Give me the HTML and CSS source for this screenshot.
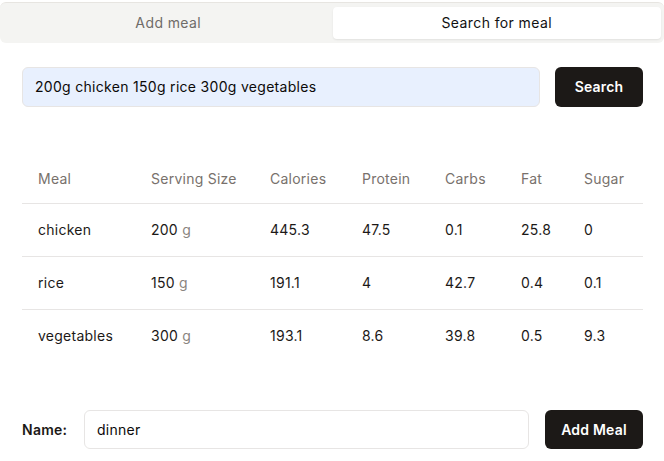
FILE: index.html
```html
<!DOCTYPE html>
<html>
<head>
<meta charset="utf-8">
<link rel="stylesheet" href="styles.css">
</head>
<body>
<div class="page">
  <div class="tabs">
    <div class="tab">Add meal</div>
    <div class="tab active">Search for meal</div>
  </div>
  <div class="content">
    <div class="search-row">
      <div class="input filled">200g chicken 150g rice 300g vegetables</div>
      <button class="btn search-btn">Search</button>
    </div>
    <table class="meals">
      <colgroup>
        <col class="c1"><col class="c2"><col class="c3"><col class="c4"><col class="c5"><col class="c6"><col class="c7">
      </colgroup>
      <thead>
        <tr><th>Meal</th><th>Serving Size</th><th>Calories</th><th>Protein</th><th>Carbs</th><th>Fat</th><th>Sugar</th></tr>
      </thead>
      <tbody>
        <tr><td>chicken</td><td>200 <span class="unit">g</span></td><td>445.3</td><td>47.5</td><td>0.1</td><td>25.8</td><td>0</td></tr>
        <tr><td>rice</td><td>150 <span class="unit">g</span></td><td>191.1</td><td>4</td><td>42.7</td><td>0.4</td><td>0.1</td></tr>
        <tr><td>vegetables</td><td>300 <span class="unit">g</span></td><td>193.1</td><td>8.6</td><td>39.8</td><td>0.5</td><td>9.3</td></tr>
      </tbody>
    </table>
    <div class="name-row">
      <label class="name-label">Name:</label>
      <div class="input plain">dinner</div>
      <button class="btn add-btn">Add Meal</button>
    </div>
  </div>
</div>
</body>
</html>
```
FILE: styles.css
```css
* { box-sizing: border-box; }
html, body { margin: 0; padding: 0; background: #fff; }
body {
  font-family: "Inter", "Noto Sans", sans-serif;
  font-size: 14px;
  letter-spacing: 0.25px;
  color: #1c1917;
}
.page { padding-top: 2px; }
.tabs {
  display: grid;
  grid-template-columns: 1fr 1fr;
  height: 41px;
  background: #f4f4f2;
  border-top: 1px solid #e7e5e1;
  border-radius: 6px;
  padding: 4px 3px 4px 4px;
}
.tab {
  display: flex;
  align-items: center;
  justify-content: center;
  color: #6f6c69;
  font-size: 14px;
  letter-spacing: 0.4px;
  border-radius: 4px;
  padding-bottom: 2px;
}
.tab.active {
  background: #fff;
  color: #111;
  box-shadow: 0 1px 2px rgba(0,0,0,0.08);
}
.content { padding: 24px 21px 0 22px; }
.search-row {
  display: flex;
  gap: 15px;
  align-items: center;
}
.input {
  flex: 1;
  height: 40px;
  border: 1px solid #e7e5e4;
  border-radius: 6px;
  display: flex;
  align-items: center;
  padding: 0 12px 1px;
  font-size: 14px;
  color: #0c0a09;
}
.input.filled { background: #e8f0fe; letter-spacing: 0.3px; }
.input.plain { background: #fff; height: 39px; }
.btn {
  font-family: inherit;
  letter-spacing: 0.2px;
  background: #1c1917;
  color: #fff;
  border: none;
  border-radius: 6px;
  font-weight: 600;
  font-size: 14px;
  height: 40px;
  padding: 0 0 1px;
}
.search-btn { width: 88px; flex: none; }
.add-btn { width: 98px; height: 39px; flex: none; }
.meals {
  width: 100%;
  margin-top: 48px;
  border-collapse: collapse;
  table-layout: fixed;
}
.c1 { width: 113px; }
.c2 { width: 119px; }
.c3 { width: 92px; }
.c4 { width: 83px; }
.c5 { width: 76px; }
.c6 { width: 63px; }
.c7 { width: 75px; }
.meals th {
  text-align: left;
  font-weight: 400;
  color: #78716c;
  height: 48px;
  padding: 0 0 0 16px;
  border-bottom: 1px solid #e7e5e4;
}
.meals td {
  height: 53px;
  padding: 0 0 0 16px;
  border-bottom: 1px solid #e7e5e4;
}
.meals tbody tr:last-child td { border-bottom: none; }
.unit { color: #8a8580; }
.name-row {
  display: flex;
  align-items: center;
  gap: 16px;
  margin-top: 48px;
}
.name-label { font-weight: 600; width: 46px; flex: none; }
```
